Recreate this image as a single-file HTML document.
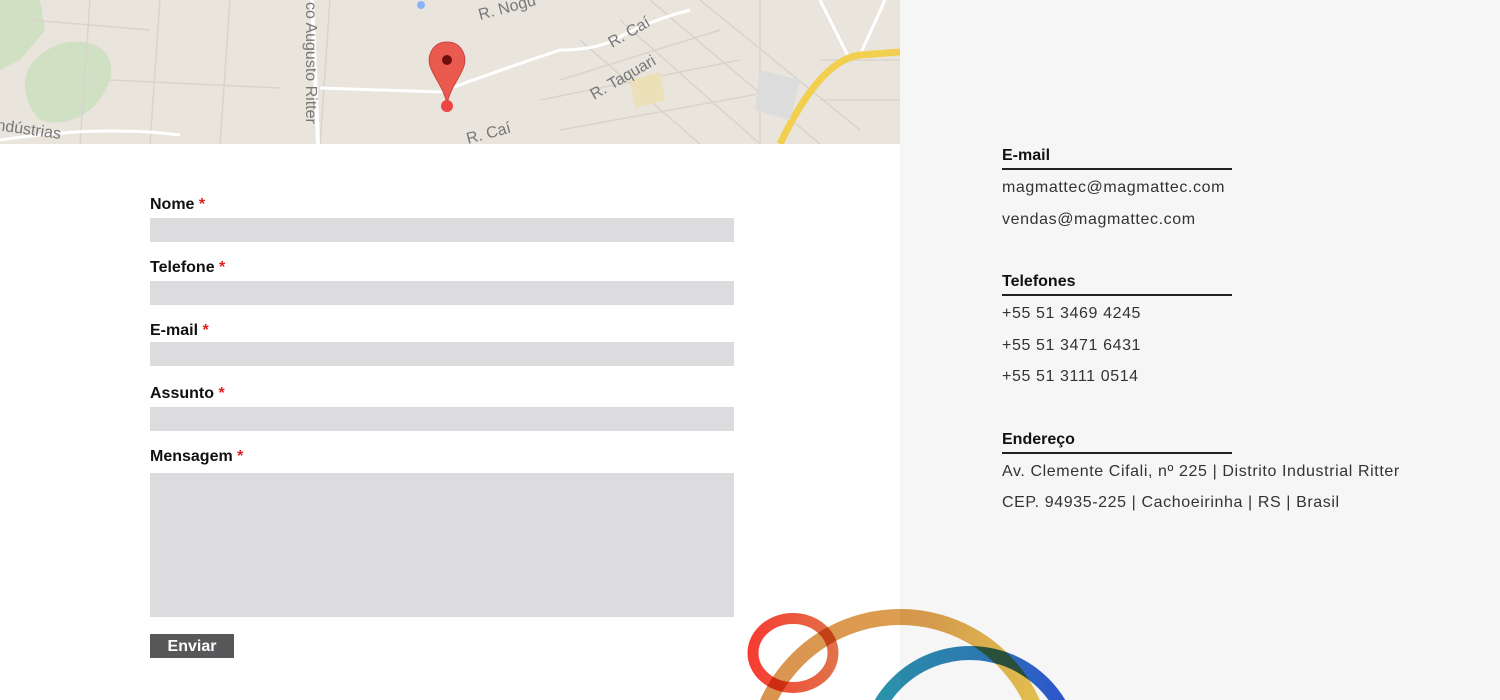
<!DOCTYPE html>
<html><head><meta charset="utf-8"><style>
*{margin:0;padding:0;box-sizing:border-box}
html,body{width:1500px;height:700px;overflow:hidden}
body{background:#fff;font-family:"Liberation Sans",sans-serif;position:relative}
.right{position:absolute;left:900px;top:0;width:600px;height:700px;background:#f6f6f6}
.map{position:absolute;left:0;top:0;width:900px;height:144px;background:#e9e5dd;overflow:hidden}
label{position:absolute;left:150px;font-weight:bold;font-size:16px;color:#111}
label span{color:#e02020}
.in{position:absolute;left:150px;width:584px;height:24px;background:#dcdcde}
.btn{position:absolute;left:150px;top:634px;width:84px;height:24px;background:#58585a;color:#fff;font-weight:bold;font-size:16px;text-align:center;line-height:25px}
h4{position:absolute;left:1002px;width:230px;font-size:16px;font-weight:bold;color:#111;border-bottom:2px solid #222;padding-bottom:3px;top:0}
.t{position:absolute;left:1002px;font-size:16px;color:#333;letter-spacing:0.6px;white-space:nowrap}
svg.r{position:absolute;left:0;top:0}
</style></head><body>
<div class="right"></div>
<div class="map">
<svg width="900" height="144">
<path d="M0 0 L40 0 L45 30 L20 60 L0 70Z" fill="#cfe0c3"/>
<path d="M40 55 C70 30 120 40 110 80 C100 110 70 130 40 120 C20 100 20 70 40 55Z" fill="#cfe0c3"/>
<g stroke="#d9d4cb" stroke-width="1.5" fill="none">
<path d="M30 20 L150 30 M90 0 L80 144 M160 0 L150 144 M230 0 L220 144 M110 80 L280 88 M330 0 L320 144 M580 40 L700 144 M620 20 L760 144 M650 0 L820 144 M700 0 L860 130 M560 80 L720 30 M540 100 L740 60 M560 130 L780 90 M760 0 L760 144 M820 60 L900 60 M820 100 L900 100"/>
</g>
<path d="M0 140 Q100 125 180 135 M320 88 L440 92 Q500 70 560 50 Q590 50 610 42 Q650 20 690 10" stroke="#fff" stroke-width="3" fill="none"/>
<path d="M312 0 L318 144" stroke="#fff" stroke-width="4"/>
<path d="M820 0 L850 60 M885 0 L860 55" stroke="#fff" stroke-width="3"/>
<path d="M780 144 Q820 60 860 55 L900 52" stroke="#f2cf4e" stroke-width="7" fill="none"/>
<path d="M760 70 L800 80 L790 120 L755 110Z" fill="#dcdcdc"/>
<path d="M630 80 L660 72 L665 100 L635 108Z" fill="#ece0b8"/>
<ellipse cx="421" cy="5" rx="4" ry="4" fill="#8ab4f8"/>
<path d="M447 42 C433 42 427 55 430 66 C434 78 444 88 447 104 C450 88 460 78 464 66 C467 55 461 42 447 42Z" fill="#ea5a4f" stroke="#c44" stroke-width="1"/>
<circle cx="447" cy="60" r="5" fill="#6e1010"/>
<circle cx="447" cy="106" r="6" fill="#e44"/>
<g font-family="Liberation Sans" font-size="16" fill="#777">
<text x="306" y="2" transform="rotate(90 306 2)">co Augusto Ritter</text>
<text x="480" y="20" transform="rotate(-15 480 20)">R. Nogu</text>
<text x="612" y="48" transform="rotate(-30 612 48)">R. Caí</text>
<text x="594" y="100" transform="rotate(-30 594 100)">R. Taquari</text>
<text x="468" y="144" transform="rotate(-15 468 144)">R. Caí</text>
<text x="-4" y="130" transform="rotate(8 -4 130)">ndústrias</text>
</g>
</svg></div>

<label style="top:196px">Nome <span>*</span></label><div class="in" style="top:218px"></div>
<label style="top:259px">Telefone <span>*</span></label><div class="in" style="top:281px"></div>
<label style="top:322px">E-mail <span>*</span></label><div class="in" style="top:342px"></div>
<label style="top:385px">Assunto <span>*</span></label><div class="in" style="top:407px"></div>
<label style="top:448px">Mensagem <span>*</span></label><div class="in" style="top:473px;height:144px"></div>
<div class="btn">Enviar</div>

<h4 style="top:147px">E-mail</h4>
<div class="t" style="top:179px">magmattec@magmattec.com</div>
<div class="t" style="top:211px">vendas@magmattec.com</div>
<h4 style="top:273px">Telefones</h4>
<div class="t" style="top:305px">+55 51 3469 4245</div>
<div class="t" style="top:337px">+55 51 3471 6431</div>
<div class="t" style="top:368px">+55 51 3111 0514</div>
<h4 style="top:431px">Endereço</h4>
<div class="t" style="top:463px">Av. Clemente Cifali, nº 225 | Distrito Industrial Ritter</div>
<div class="t" style="top:494px">CEP. 94935-225 | Cachoeirinha | RS | Brasil</div>

<svg class="r" width="1500" height="700">
<defs>
<linearGradient id="go" gradientUnits="userSpaceOnUse" x1="755" y1="0" x2="1045" y2="0"><stop offset="0" stop-color="#d99350"/><stop offset="0.6" stop-color="#dda050"/><stop offset="1" stop-color="#ecc850"/></linearGradient>
<linearGradient id="gb" gradientUnits="userSpaceOnUse" x1="866" y1="0" x2="1074" y2="0"><stop offset="0" stop-color="#2a95a8"/><stop offset="0.5" stop-color="#2d80b8"/><stop offset="1" stop-color="#2f52d8"/></linearGradient>
<linearGradient id="gr" gradientUnits="userSpaceOnUse" x1="747" y1="0" x2="839" y2="0"><stop offset="0" stop-color="#f83a32"/><stop offset="1" stop-color="#e0744a"/></linearGradient>
</defs>
<circle cx="900" cy="762" r="145" fill="none" stroke="url(#go)" stroke-width="16" style="mix-blend-mode:multiply"/>
<circle cx="970" cy="757" r="104" fill="none" stroke="url(#gb)" stroke-width="14" style="mix-blend-mode:multiply"/>
<ellipse cx="793" cy="653" rx="40" ry="34.5" fill="none" stroke="url(#gr)" stroke-width="11" style="mix-blend-mode:multiply"/>
</svg>
</body></html>
